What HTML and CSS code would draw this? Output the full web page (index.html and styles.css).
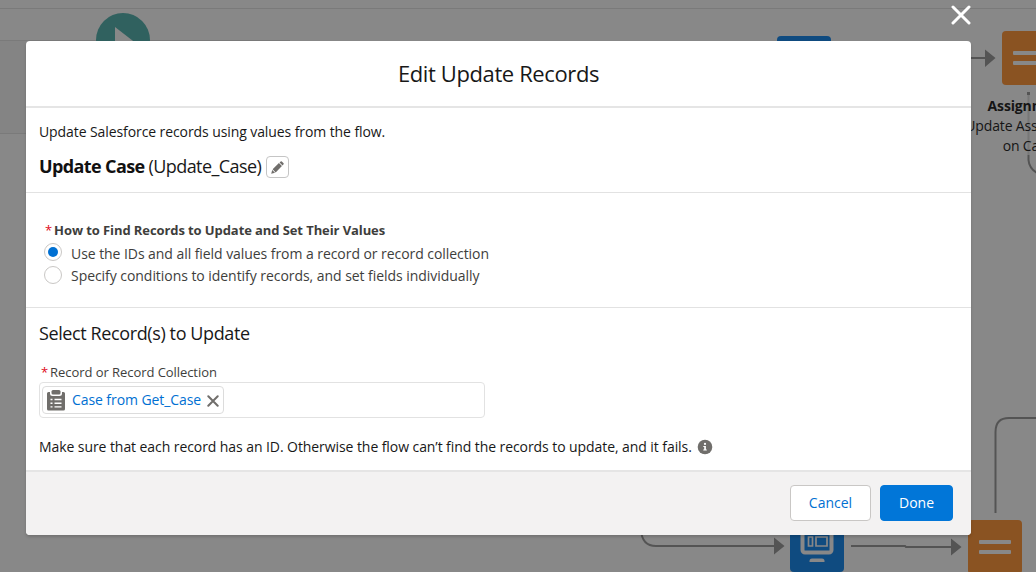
FILE: index.html
```html
<!DOCTYPE html>
<html lang="en">
<head>
<meta charset="utf-8">
<title>Edit Update Records</title>
<link rel="stylesheet" href="styles.css">
</head>
<body>
<div class="screen">
  <div class="canvas" aria-hidden="true">
    <svg class="diagram" width="1036" height="572" viewBox="0 0 1036 572">
      <rect x="0" y="41" width="26" height="92" fill="#848484"/>
      <path d="M0 8.5H1036M0 40.5H290M0 133.5H26" stroke="#7a7a7a" fill="none"/>
      <circle cx="123" cy="40" r="27" fill="#30615f"/>
      <path d="M115 27L115 53L137 44Z" fill="#888"/>
      <rect x="777" y="36" width="54" height="54" rx="4" fill="#0f4b80"/>
      <g stroke="#545454" stroke-width="2" fill="none">
        <path d="M960 58H986"/>
        <path d="M1028.500 155V160Q1029 168 1037 173"/>
        <path d="M641 530Q642 546 656 546H776"/>
        <path d="M851 546H905L906 547H953"/>
        <path d="M995.500 513V432Q995.500 418 1009 418H1036"/>
      </g>
      <path d="M1028.500 95V155" stroke="#777" stroke-width="2"/>
      <rect x="1027" y="92" width="3" height="3" fill="#545454"/>
      <path d="M985 49.500L995.500 58L985 67ZM774 537.500L784.500 546L774 554.500ZM951 538.500L961.500 547L951 555.500Z" fill="#545454"/>
      <rect x="1002" y="31" width="54" height="54" rx="4" fill="#8a5322"/>
      <rect x="1013" y="51" width="32" height="4" rx="1" fill="#888"/>
      <rect x="1013" y="61" width="32" height="4" rx="1" fill="#888"/>
      <rect x="790" y="518" width="54" height="54" rx="4" fill="#0f4b80"/>
      <rect x="802.500" y="523.500" width="29" height="29" rx="2.500" fill="none" stroke="#888" stroke-width="4"/>
      <path d="M808 529h19v5h-19zM808.500 537h4v9h-4zM816 537h11v9h-11z" fill="none" stroke="#888" stroke-width="1.700"/>
      <path d="M809.500 562v-1q0-2.500 2.500-2.500h10q2.500 0 2.500 2.500v1z" fill="#888"/>
      <rect x="968" y="520" width="54" height="54" rx="4" fill="#8a5322"/>
      <rect x="979" y="540" width="32" height="4" rx="1" fill="#888"/>
      <rect x="979" y="550" width="32" height="4" rx="1" fill="#888"/>
    </svg>
    <div class="node-label"><b>Assignment</b><br>Update Assignment<br>on Case</div>
  </div>

  <button class="close" aria-label="Close">
    <svg width="20" height="20" viewBox="0 0 20 20"><path d="M2 2L18 18M18 2L2 18" stroke="#fff" stroke-width="3" stroke-linecap="round"/></svg>
  </button>

  <section class="modal">
    <header class="modal-header"><h1 class="title">Edit Update Records</h1></header>

    <div class="intro">
      <p class="description">Update Salesforce records using values from the flow.</p>
      <div class="name-row">
        <strong class="label-name">Update Case</strong>
        <span class="api-name">(Update_Case)</span>
        <button class="edit" aria-label="Edit">
          <svg width="13" height="13" viewBox="0 0 12 12" fill="#706e6b"><path d="M0.200 11.800L1.100 8.300L3.700 10.900ZM1.500 7.700L7.300 1.900L10.100 4.700L4.300 10.500ZM7.900 1.300L8.900 .4Q9.500 0 10 .4L11.600 2Q12 2.500 11.600 3.100L10.700 4.100Z"/></svg>
        </button>
      </div>
    </div>

    <div class="method">
      <p class="legend"><span class="req">*</span>How to Find Records to Update and Set Their Values</p>
      <div class="option"><span class="radio checked"></span><span class="opt-a">Use the IDs and all field values from a record or record collection</span></div>
      <div class="option"><span class="radio"></span><span class="opt-b">Specify conditions to identify records, and set fields individually</span></div>
    </div>

    <div class="select">
      <h2 class="subtitle">Select Record(s) to Update</h2>
      <p class="field-label"><span class="req">*</span>Record or Record Collection</p>
      <div class="field">
        <div class="pill">
          <svg class="pill-icon" width="20" height="22" viewBox="0 0 20 22">
            <path d="M2.500 3H4V4.500Q4 7 6.500 7H13.500Q16 7 16 4.500V3H17.500Q19 3 19 4.500V20Q19 21.500 17.500 21.500H2.500Q1 21.500 1 20V4.500Q1 3 2.500 3Z" fill="#706e6b"/>
            <path d="M7 1H13Q14.500 1 14.500 2.500V4Q14.500 5.500 13 5.500H7Q5.500 5.500 5.500 4V2.500Q5.500 1 7 1Z" fill="#706e6b"/>
            <path d="M4.500 10.500H6.500M8.500 10.500H15.500M4.500 14.200H6.500M8.500 14.200H15.500M4.500 17.900H6.500M8.500 17.900H15.500" stroke="#fff" stroke-width="1.400"/>
          </svg>
          <span class="pill-text">Case from Get_Case</span>
          <svg class="pill-x" width="12" height="12" viewBox="0 0 12 12"><path d="M1.300 1.300L10.700 10.700M10.700 1.300L1.300 10.700" stroke="#706e6b" stroke-width="2" stroke-linecap="round"/></svg>
        </div>
      </div>
      <p class="note"><span>Make sure that each record has an ID. Otherwise the flow can’t find the records to update, and it fails.</span>
        <svg width="16" height="16" viewBox="0 0 16 16"><circle cx="8" cy="8" r="7.300" fill="#706e6b"/><circle cx="8" cy="4.900" r="1.100" fill="#fff"/><path d="M6.300 7H8.900V10.500H9.800V11.600H6.300V10.500H7.200V8.100H6.300Z" fill="#fff"/></svg>
      </p>
    </div>

    <footer class="modal-footer">
      <button class="btn cancel">Cancel</button>
      <button class="btn done">Done</button>
    </footer>
  </section>
</div>
</body>
</html>
```

FILE: styles.css
```css
* { box-sizing: border-box; }
body, p, h1, h2 { margin: 0; }
body { font-family: "Open Sans", "Noto Sans", sans-serif; font-size: 14px; line-height: 20px; color: #181818; }
button { font: inherit; padding: 0; cursor: pointer; }
svg { display: block; flex: none; }

.screen { position: relative; width: 1036px; height: 572px; overflow: hidden; background: #888; padding: 41px 65px 37px 26px; }
.canvas { position: absolute; inset: 0; }
.node-label { position: absolute; left: 958px; top: 96px; width: 140px; text-align: center; color: #151515; letter-spacing: -0.15px; white-space: nowrap; }
.close { position: absolute; left: 951px; top: 5px; width: 20px; height: 20px; border: 0; background: none; }

.modal { position: relative; display: flex; flex-direction: column; width: 945px; height: 494px; background: #fff; border-radius: 4px; box-shadow: 0 2px 3px rgba(0,0,0,.16); white-space: nowrap; overflow: hidden; }
.modal-header { height: 67px; padding-bottom: 2px; border-bottom: 2px solid #e5e5e5; display: flex; align-items: center; justify-content: center; }
.title { font-size: 22px; line-height: 28px; font-weight: 400; letter-spacing: -0.39px; }

.intro { height: 85px; padding: 14px 13px 0; border-bottom: 1px solid #e2e2e2; }
.description { letter-spacing: -0.09px; }
.name-row { display: flex; align-items: center; height: 24px; margin-top: 13px; font-size: 18px; }
.label-name, .api-name { margin-bottom: 2px; }
.label-name { letter-spacing: -0.62px; color: #111; margin-right: 4px; }
.api-name { letter-spacing: -0.57px; margin-right: 5px; }
.edit { width: 23px; height: 22px; display: grid; place-items: center; border: 1px solid #c5c5c5; border-radius: 4px; background: #fff; }

.method { height: 115px; padding: 27px 18px 0; border-bottom: 1px solid #e2e2e2; color: #3e3e3c; }
.legend { font-size: 13px; font-weight: 700; letter-spacing: -0.09px; padding-left: 1px; }
.req { color: #e00b20; font-weight: 400; margin-right: 2px; }
.option { display: flex; align-items: center; height: 22px; gap: 9px; }
.legend + .option { margin-top: 3px; }
.radio { width: 18px; height: 18px; display: grid; place-items: center; border: 1px solid #c9c7c5; border-radius: 50%; margin-bottom: 4px; }
.option + .option .radio { margin-bottom: 2px; }
.checked::after { content: ""; width: 10px; height: 10px; border-radius: 50%; background: #0070d2; }
.opt-a { letter-spacing: -0.06px; }
.opt-b { letter-spacing: -0.05px; }

.select { height: 162px; padding: 14px 13px 0; }
.subtitle { font-size: 18px; line-height: 22px; font-weight: 400; letter-spacing: -0.39px; }
.field-label { font-size: 13px; margin: 18px 0 0 2px; letter-spacing: -0.06px; color: #3e3e3c; }
.field { width: 446px; height: 36px; padding: 3px 2px; border: 1px solid #e2e2e2; border-radius: 4px; }
.pill { width: 182px; height: 28px; display: flex; align-items: center; padding-left: 3px; border: 1px solid #dcdcdc; border-radius: 4px; color: #0070d2; }
.pill-text { margin: 0 6px 1px 6px; letter-spacing: -0.08px; }
.pill-x { margin-top: 2px; }
.note { display: flex; align-items: center; gap: 5px; margin-top: 19px; letter-spacing: -0.075px; }

.modal-footer { height: 65px; display: flex; align-items: center; justify-content: flex-end; gap: 9px; padding: 0 18px 2px 0; border-top: 2px solid #e5e5e5; background: #f3f2f2; }
.btn { height: 36px; border: 1px solid #c9c7c5; border-radius: 4px; background: #fff; color: #0070d2; }
.cancel { width: 81px; }
.done { width: 73px; border-color: #0176d8; background: #0176d8; color: #fff; }
```
